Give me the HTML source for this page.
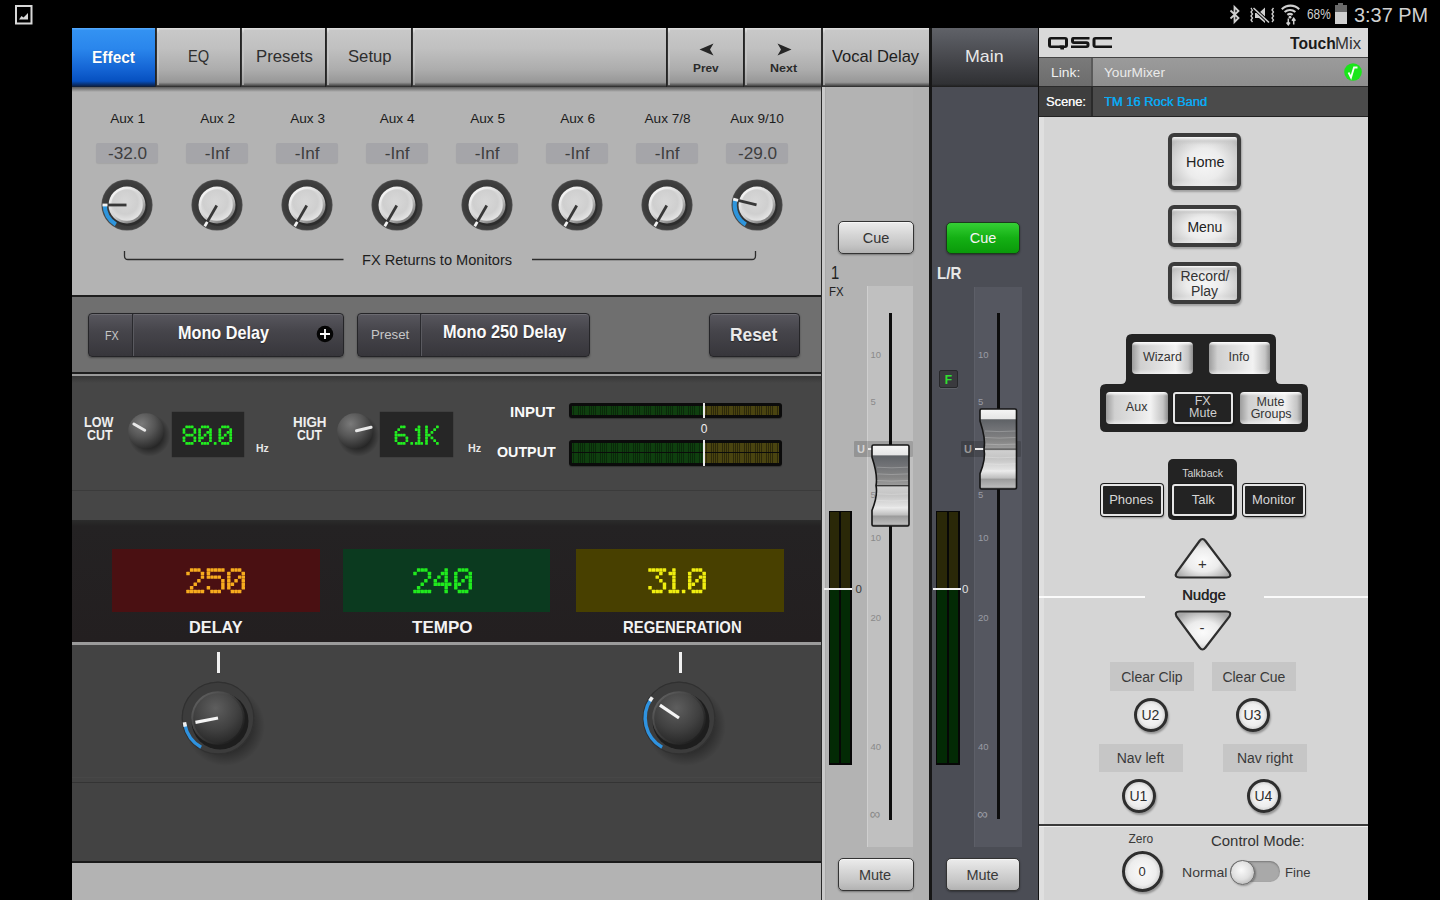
<!DOCTYPE html>
<html><head><meta charset="utf-8">
<style>
*{box-sizing:border-box;margin:0;padding:0}
html,body{width:1440px;height:900px;overflow:hidden;background:#000;font-family:"Liberation Sans",sans-serif}
.a{position:absolute}
.t{position:absolute;line-height:1;white-space:nowrap;transform-origin:0 0}
svg{position:absolute;overflow:visible}
</style></head><body>
<div class="a" style="left:0px;top:0px;width:1440px;height:900px;background:#000"></div>
<svg style="left:15px;top:5px" width="18" height="20" viewBox="0 0 18 20"><rect x="1" y="1" width="15.5" height="17.5" fill="none" stroke="#d8d8d8" stroke-width="2"/><path d="M4 14.5 L6.5 11 L8.5 12.5 L13 8 L13 14.5 Z" fill="#d8d8d8"/></svg>
<svg style="left:1228px;top:5px" width="14" height="19" viewBox="0 0 14 19"><path d="M2.5 5.5 L10.5 13 L6.5 17 L6.5 2 L10.5 6 L2.5 13.5" fill="none" stroke="#cfcfcf" stroke-width="1.8"/></svg>
<svg style="left:1248px;top:5px" width="30" height="20" viewBox="0 0 30 20"><path d="M3 3 L4.5 5 L3 7 L4.5 9 L3 11 L4.5 13 L3 15 L4.5 17" fill="none" stroke="#cfcfcf" stroke-width="1.3"/><path d="M25.5 3 L24 5 L25.5 7 L24 9 L25.5 11 L24 13 L25.5 15 L24 17" fill="none" stroke="#cfcfcf" stroke-width="1.3"/><path d="M7 8 L11 8 L17 2.5 L17 18 L11 13 L7 13 Z" fill="#cfcfcf"/><path d="M5 2.5 L21.5 18" stroke="#000" stroke-width="3.2"/><path d="M5.5 3 L21 17.5" stroke="#cfcfcf" stroke-width="1.6"/></svg>
<svg style="left:1279px;top:3px" width="23" height="23" viewBox="0 0 23 23"><path d="M2.8 6.2 A12.5 12.5 0 0 1 20.2 6.2" fill="none" stroke="#cfcfcf" stroke-width="2.2"/><path d="M5.6 9 A8.5 8.5 0 0 1 16.4 9" fill="none" stroke="#cfcfcf" stroke-width="2.2"/><path d="M8.4 11.8 A4.5 4.5 0 0 1 13.6 11.8" fill="none" stroke="#cfcfcf" stroke-width="2.2"/><circle cx="11" cy="14.2" r="1.4" fill="#cfcfcf"/><path d="M9.3 15.5 V21.5 M7.6 19.5 L9.3 21.8 L11 19.5 M14.7 21.5 V15.5 M13 17.7 L14.7 15.3 L16.4 17.7" fill="none" stroke="#cfcfcf" stroke-width="1.5"/></svg>
<div class="t" style="left:1306.50px;top:8.27px;font-size:13.8px;color:#cfcfcf;font-weight:400;font-family:'Liberation Sans';transform:scaleX(0.8593);">68%</div>
<div class="a" style="left:1338px;top:2.5px;width:5px;height:2px;background:#6a6a6a"></div>
<div class="a" style="left:1334.5px;top:4.5px;width:12px;height:7px;background:#6a6a6a"></div>
<div class="a" style="left:1334.5px;top:11.5px;width:12px;height:12.5px;background:#cfcfcf"></div>
<div class="t" style="left:1354.00px;top:5.07px;font-size:20.5px;color:#d0d0d0;font-weight:400;font-family:'Liberation Sans';transform:scaleX(0.9699);">3:37 PM</div>
<div class="a" style="left:72px;top:28px;width:84px;height:59px;background:linear-gradient(#5aaeff,#3392f2 4%,#2a86ec 35%,#1464d4 70%,#0650c0 90%,#0a2a60 97%,#101c30)"></div>
<div class="a" style="left:156px;top:28px;width:85px;height:59px;background:linear-gradient(#e2e2e2,#c8c8c8 4%,#c0c0c0 35%,#adadad 70%,#979797 92%,#555 97%,#262626)"></div>
<div class="a" style="left:241px;top:28px;width:85px;height:59px;background:linear-gradient(#e2e2e2,#c8c8c8 4%,#c0c0c0 35%,#adadad 70%,#979797 92%,#555 97%,#262626)"></div>
<div class="a" style="left:326px;top:28px;width:86px;height:59px;background:linear-gradient(#e2e2e2,#c8c8c8 4%,#c0c0c0 35%,#adadad 70%,#979797 92%,#555 97%,#262626)"></div>
<div class="a" style="left:412px;top:28px;width:255px;height:59px;background:linear-gradient(#e2e2e2,#c8c8c8 4%,#c0c0c0 35%,#adadad 70%,#979797 92%,#555 97%,#262626)"></div>
<div class="a" style="left:667px;top:28px;width:77px;height:59px;background:linear-gradient(#e2e2e2,#c8c8c8 4%,#c0c0c0 35%,#adadad 70%,#979797 92%,#555 97%,#262626)"></div>
<div class="a" style="left:744px;top:28px;width:78px;height:59px;background:linear-gradient(#e2e2e2,#c8c8c8 4%,#c0c0c0 35%,#adadad 70%,#979797 92%,#555 97%,#262626)"></div>
<div class="a" style="left:822px;top:28px;width:107px;height:59px;background:linear-gradient(#e2e2e2,#c8c8c8 4%,#c0c0c0 35%,#adadad 70%,#979797 92%,#555 97%,#262626)"></div>
<div class="a" style="left:155px;top:28px;width:2px;height:59px;background:linear-gradient(90deg,#1c1c1c,#3a3a3a)"></div>
<div class="a" style="left:157px;top:28px;width:2px;height:57px;background:linear-gradient(#e6e6e6,#c6c6c6 10%,#c4c4c4 60%,#a0a0a0)"></div>
<div class="a" style="left:240px;top:28px;width:2px;height:59px;background:linear-gradient(90deg,#1c1c1c,#3a3a3a)"></div>
<div class="a" style="left:242px;top:28px;width:2px;height:57px;background:linear-gradient(#e6e6e6,#c6c6c6 10%,#c4c4c4 60%,#a0a0a0)"></div>
<div class="a" style="left:325px;top:28px;width:2px;height:59px;background:linear-gradient(90deg,#1c1c1c,#3a3a3a)"></div>
<div class="a" style="left:327px;top:28px;width:2px;height:57px;background:linear-gradient(#e6e6e6,#c6c6c6 10%,#c4c4c4 60%,#a0a0a0)"></div>
<div class="a" style="left:411px;top:28px;width:2px;height:59px;background:linear-gradient(90deg,#1c1c1c,#3a3a3a)"></div>
<div class="a" style="left:413px;top:28px;width:2px;height:57px;background:linear-gradient(#e6e6e6,#c6c6c6 10%,#c4c4c4 60%,#a0a0a0)"></div>
<div class="a" style="left:666px;top:28px;width:2px;height:59px;background:linear-gradient(90deg,#1c1c1c,#3a3a3a)"></div>
<div class="a" style="left:668px;top:28px;width:2px;height:57px;background:linear-gradient(#e6e6e6,#c6c6c6 10%,#c4c4c4 60%,#a0a0a0)"></div>
<div class="a" style="left:743px;top:28px;width:2px;height:59px;background:linear-gradient(90deg,#1c1c1c,#3a3a3a)"></div>
<div class="a" style="left:745px;top:28px;width:2px;height:57px;background:linear-gradient(#e6e6e6,#c6c6c6 10%,#c4c4c4 60%,#a0a0a0)"></div>
<div class="a" style="left:821px;top:28px;width:2px;height:59px;background:#2a2a2a"></div>
<div class="a" style="left:823px;top:28px;width:2px;height:57px;background:linear-gradient(#e6e6e6,#c6c6c6 10%,#c4c4c4 60%,#a0a0a0)"></div>
<div class="a" style="left:929px;top:28px;width:3px;height:872px;background:#161616"></div>
<div class="a" style="left:932px;top:28px;width:106px;height:59px;background:linear-gradient(#606268,#56585e 20%,#4a4b50 45%,#3a3b3f 75%,#303134 95%,#1c1c1c)"></div>
<div class="t" style="left:91.69px;top:48.55px;font-size:17px;color:#fff;font-weight:700;font-family:'Liberation Sans';transform:scaleX(0.9105);text-shadow:0 0 1px rgba(0,0,0,.3)">Effect</div>
<div class="t" style="left:187.64px;top:48.25px;font-size:17px;color:#2e2e2e;font-weight:400;font-family:'Liberation Sans';transform:scaleX(0.8612);">EQ</div>
<div class="t" style="left:255.71px;top:47.55px;font-size:17px;color:#2e2e2e;font-weight:400;font-family:'Liberation Sans';transform:scaleX(0.9852);">Presets</div>
<div class="t" style="left:347.60px;top:47.55px;font-size:17px;color:#2e2e2e;font-weight:400;font-family:'Liberation Sans';transform:scaleX(0.9802);">Setup</div>
<div class="t" style="left:831.70px;top:48.25px;font-size:17px;color:#1e1e1e;font-weight:400;font-family:'Liberation Sans';transform:scaleX(0.9704);">Vocal Delay</div>
<div class="t" style="left:965.05px;top:47.55px;font-size:17px;color:#e8e8e8;font-weight:400;font-family:'Liberation Sans';transform:scaleX(1.0482);">Main</div>
<div class="t" style="left:692.80px;top:62.52px;font-size:10.8px;color:#2a2a2a;font-weight:700;font-family:'Liberation Sans';transform:scaleX(1.0979);">Prev</div>
<div class="t" style="left:769.70px;top:62.52px;font-size:10.8px;color:#2a2a2a;font-weight:700;font-family:'Liberation Sans';transform:scaleX(1.1551);">Next</div>
<svg style="left:699px;top:43px" width="15" height="13" viewBox="0 0 15 13"><path d="M0.5 6.5 L14.5 0.5 L11 6.5 L14.5 12.5 Z" fill="#262626"/></svg>
<svg style="left:777px;top:43px" width="15" height="13" viewBox="0 0 15 13"><path d="M14.5 6.5 L0.5 0.5 L4 6.5 L0.5 12.5 Z" fill="#262626"/></svg>
<div class="a" style="left:72px;top:87px;width:750px;height:208px;background:#b3b3b3"></div>
<div class="a" style="left:72px;top:87px;width:750px;height:5px;background:linear-gradient(#5a5a5a,rgba(179,179,179,0))"></div>
<div class="a" style="left:72px;top:295px;width:750px;height:2px;background:#1e1e1e"></div>
<div class="a" style="left:72px;top:297px;width:750px;height:75px;background:#6f6f6f"></div>
<div class="a" style="left:72px;top:372px;width:750px;height:2px;background:#1e1e1e"></div>
<div class="a" style="left:72px;top:374px;width:750px;height:2px;background:#9a9a9a"></div>
<div class="a" style="left:72px;top:376px;width:750px;height:144px;background:linear-gradient(#363636,#464646 7px,#464646)"></div>
<div class="a" style="left:72px;top:490px;width:750px;height:1px;background:#3b3b3b"></div>
<div class="a" style="left:72px;top:520px;width:750px;height:122px;background:linear-gradient(#2b2b2b,#242223 6px,#231f20)"></div>
<div class="a" style="left:72px;top:642px;width:750px;height:3px;background:#9b9b9b"></div>
<div class="a" style="left:72px;top:645px;width:750px;height:216px;background:#434343"></div>
<div class="a" style="left:72px;top:777px;width:750px;height:1px;background:#474747"></div>
<div class="a" style="left:72px;top:782px;width:750px;height:1px;background:#343434"></div>
<div class="a" style="left:72px;top:861px;width:750px;height:2px;background:#1a1a1a"></div>
<div class="a" style="left:72px;top:863px;width:750px;height:37px;background:#b3b3b3"></div>
<div class="a" style="left:821px;top:87px;width:1px;height:813px;background:#2a2a2a"></div>
<div class="a" style="left:822px;top:87px;width:107px;height:813px;background:#b3b3b3"></div>
<div class="a" style="left:822px;top:87px;width:3px;height:813px;background:#c9c9c9"></div>
<div class="a" style="left:825px;top:87px;width:1px;height:813px;background:#aaaaaa"></div>
<div class="a" style="left:913px;top:87px;width:16px;height:813px;background:#b1b1b1"></div>
<div class="a" style="left:932px;top:87px;width:106px;height:813px;background:#4b4d55"></div>
<div class="a" style="left:1038px;top:28px;width:1px;height:872px;background:#111"></div>
<div class="a" style="left:1039px;top:28px;width:329px;height:872px;background:#d5d5d5"></div>
<div class="a" style="left:1039px;top:116px;width:5px;height:784px;background:#dfdfdf"></div>
<svg width="0" height="0" style="left:0;top:0"><defs>
<radialGradient id="capL" cx="45%" cy="40%" r="65%"><stop offset="0" stop-color="#d8d8d8"/><stop offset="0.6" stop-color="#cfcfcf"/><stop offset="1" stop-color="#e8e8e8"/></radialGradient>
<linearGradient id="bevL" x1="0.2" y1="0.1" x2="0.8" y2="0.9"><stop offset="0" stop-color="#f4f4f4"/><stop offset="0.55" stop-color="#d0d0d0"/><stop offset="1" stop-color="#7a7a7a"/></linearGradient>
<radialGradient id="ringL" cx="50%" cy="50%" r="50%"><stop offset="0.75" stop-color="#393939"/><stop offset="0.95" stop-color="#404040"/><stop offset="1" stop-color="#5a5a5a"/></radialGradient>
<radialGradient id="capD" cx="45%" cy="30%" r="75%"><stop offset="0" stop-color="#5e5e5e"/><stop offset="0.6" stop-color="#404040"/><stop offset="1" stop-color="#262626"/></radialGradient>
<linearGradient id="bevD" x1="0" y1="0" x2="1" y2="1"><stop offset="0" stop-color="#6a6a6a"/><stop offset="0.5" stop-color="#3a3a3a"/><stop offset="1" stop-color="#151515"/></linearGradient>
<radialGradient id="sph" cx="38%" cy="30%" r="75%"><stop offset="0" stop-color="#7a7a7a"/><stop offset="0.5" stop-color="#555"/><stop offset="1" stop-color="#262626"/></radialGradient>
<radialGradient id="shad" cx="50%" cy="50%" r="50%"><stop offset="0.6" stop-color="#000" stop-opacity=".45"/><stop offset="1" stop-color="#000" stop-opacity="0"/></radialGradient>
<radialGradient id="btnW" cx="50%" cy="50%" r="60%"><stop offset="0" stop-color="#fdfdfd"/><stop offset="0.55" stop-color="#f0f0f0"/><stop offset="1" stop-color="#a8a8a8"/></radialGradient>
</defs></svg>
<div class="t" style="left:110.20px;top:112.14px;font-size:13.6px;color:#1c1c1c;font-weight:400;font-family:'Liberation Sans';">Aux 1</div>
<div class="a" style="left:95.8px;top:143px;width:62px;height:20px;background:#a5a5a9;border-radius:2px;box-shadow:0 1px 1px rgba(0,0,0,.08)"></div>
<div class="t" style="left:107.99px;top:144.88px;font-size:17.2px;color:#3e3e3e;font-weight:400;font-family:'Liberation Sans';">-32.0</div>
<svg style="left:97.30px;top:175.30px" width="60" height="60"><circle cx="30.0" cy="30.0" r="25.6" fill="url(#ringL)"/><path d="M18.85 49.31 A22.3 22.3 0 0 1 7.70 30.00" fill="none" stroke="#2e95dc" stroke-width="4.2"/><circle cx="31.2" cy="31.8" r="19.2" fill="#222" opacity=".55"/><circle cx="30.0" cy="30.0" r="18.5" fill="url(#bevL)"/><circle cx="30.0" cy="30.0" r="15.8" fill="url(#capL)"/><line x1="29.50" y1="30.00" x2="10.50" y2="30.00" stroke="#383838" stroke-width="2.8"/><line x1="10.50" y1="30.00" x2="5.50" y2="30.00" stroke="#f2f2f2" stroke-width="2.8"/></svg>
<div class="t" style="left:200.20px;top:112.14px;font-size:13.6px;color:#1c1c1c;font-weight:400;font-family:'Liberation Sans';">Aux 2</div>
<div class="a" style="left:185.8px;top:143px;width:62px;height:20px;background:#a5a5a9;border-radius:2px;box-shadow:0 1px 1px rgba(0,0,0,.08)"></div>
<div class="t" style="left:204.77px;top:144.88px;font-size:17.2px;color:#3e3e3e;font-weight:400;font-family:'Liberation Sans';">-Inf</div>
<svg style="left:187.30px;top:175.30px" width="60" height="60"><circle cx="30.0" cy="30.0" r="25.6" fill="url(#ringL)"/><circle cx="31.2" cy="31.8" r="19.2" fill="#222" opacity=".55"/><circle cx="30.0" cy="30.0" r="18.5" fill="url(#bevL)"/><circle cx="30.0" cy="30.0" r="15.8" fill="url(#capL)"/><line x1="29.75" y1="30.43" x2="20.25" y2="46.89" stroke="#383838" stroke-width="2.8"/><line x1="20.25" y1="46.89" x2="17.75" y2="51.22" stroke="#f2f2f2" stroke-width="2.8"/></svg>
<div class="t" style="left:290.20px;top:112.14px;font-size:13.6px;color:#1c1c1c;font-weight:400;font-family:'Liberation Sans';">Aux 3</div>
<div class="a" style="left:275.8px;top:143px;width:62px;height:20px;background:#a5a5a9;border-radius:2px;box-shadow:0 1px 1px rgba(0,0,0,.08)"></div>
<div class="t" style="left:294.77px;top:144.88px;font-size:17.2px;color:#3e3e3e;font-weight:400;font-family:'Liberation Sans';">-Inf</div>
<svg style="left:277.30px;top:175.30px" width="60" height="60"><circle cx="30.0" cy="30.0" r="25.6" fill="url(#ringL)"/><circle cx="31.2" cy="31.8" r="19.2" fill="#222" opacity=".55"/><circle cx="30.0" cy="30.0" r="18.5" fill="url(#bevL)"/><circle cx="30.0" cy="30.0" r="15.8" fill="url(#capL)"/><line x1="29.75" y1="30.43" x2="20.25" y2="46.89" stroke="#383838" stroke-width="2.8"/><line x1="20.25" y1="46.89" x2="17.75" y2="51.22" stroke="#f2f2f2" stroke-width="2.8"/></svg>
<div class="t" style="left:379.70px;top:112.14px;font-size:13.6px;color:#1c1c1c;font-weight:400;font-family:'Liberation Sans';">Aux 4</div>
<div class="a" style="left:365.8px;top:143px;width:62px;height:20px;background:#a5a5a9;border-radius:2px;box-shadow:0 1px 1px rgba(0,0,0,.08)"></div>
<div class="t" style="left:384.77px;top:144.88px;font-size:17.2px;color:#3e3e3e;font-weight:400;font-family:'Liberation Sans';">-Inf</div>
<svg style="left:367.30px;top:175.30px" width="60" height="60"><circle cx="30.0" cy="30.0" r="25.6" fill="url(#ringL)"/><circle cx="31.2" cy="31.8" r="19.2" fill="#222" opacity=".55"/><circle cx="30.0" cy="30.0" r="18.5" fill="url(#bevL)"/><circle cx="30.0" cy="30.0" r="15.8" fill="url(#capL)"/><line x1="29.75" y1="30.43" x2="20.25" y2="46.89" stroke="#383838" stroke-width="2.8"/><line x1="20.25" y1="46.89" x2="17.75" y2="51.22" stroke="#f2f2f2" stroke-width="2.8"/></svg>
<div class="t" style="left:470.20px;top:112.14px;font-size:13.6px;color:#1c1c1c;font-weight:400;font-family:'Liberation Sans';">Aux 5</div>
<div class="a" style="left:455.8px;top:143px;width:62px;height:20px;background:#a5a5a9;border-radius:2px;box-shadow:0 1px 1px rgba(0,0,0,.08)"></div>
<div class="t" style="left:474.77px;top:144.88px;font-size:17.2px;color:#3e3e3e;font-weight:400;font-family:'Liberation Sans';">-Inf</div>
<svg style="left:457.30px;top:175.30px" width="60" height="60"><circle cx="30.0" cy="30.0" r="25.6" fill="url(#ringL)"/><circle cx="31.2" cy="31.8" r="19.2" fill="#222" opacity=".55"/><circle cx="30.0" cy="30.0" r="18.5" fill="url(#bevL)"/><circle cx="30.0" cy="30.0" r="15.8" fill="url(#capL)"/><line x1="29.75" y1="30.43" x2="20.25" y2="46.89" stroke="#383838" stroke-width="2.8"/><line x1="20.25" y1="46.89" x2="17.75" y2="51.22" stroke="#f2f2f2" stroke-width="2.8"/></svg>
<div class="t" style="left:560.20px;top:112.14px;font-size:13.6px;color:#1c1c1c;font-weight:400;font-family:'Liberation Sans';">Aux 6</div>
<div class="a" style="left:545.8px;top:143px;width:62px;height:20px;background:#a5a5a9;border-radius:2px;box-shadow:0 1px 1px rgba(0,0,0,.08)"></div>
<div class="t" style="left:564.77px;top:144.88px;font-size:17.2px;color:#3e3e3e;font-weight:400;font-family:'Liberation Sans';">-Inf</div>
<svg style="left:547.30px;top:175.30px" width="60" height="60"><circle cx="30.0" cy="30.0" r="25.6" fill="url(#ringL)"/><circle cx="31.2" cy="31.8" r="19.2" fill="#222" opacity=".55"/><circle cx="30.0" cy="30.0" r="18.5" fill="url(#bevL)"/><circle cx="30.0" cy="30.0" r="15.8" fill="url(#capL)"/><line x1="29.75" y1="30.43" x2="20.25" y2="46.89" stroke="#383838" stroke-width="2.8"/><line x1="20.25" y1="46.89" x2="17.75" y2="51.22" stroke="#f2f2f2" stroke-width="2.8"/></svg>
<div class="t" style="left:644.53px;top:112.14px;font-size:13.6px;color:#1c1c1c;font-weight:400;font-family:'Liberation Sans';">Aux 7/8</div>
<div class="a" style="left:635.8px;top:143px;width:62px;height:20px;background:#a5a5a9;border-radius:2px;box-shadow:0 1px 1px rgba(0,0,0,.08)"></div>
<div class="t" style="left:654.77px;top:144.88px;font-size:17.2px;color:#3e3e3e;font-weight:400;font-family:'Liberation Sans';">-Inf</div>
<svg style="left:637.30px;top:175.30px" width="60" height="60"><circle cx="30.0" cy="30.0" r="25.6" fill="url(#ringL)"/><circle cx="31.2" cy="31.8" r="19.2" fill="#222" opacity=".55"/><circle cx="30.0" cy="30.0" r="18.5" fill="url(#bevL)"/><circle cx="30.0" cy="30.0" r="15.8" fill="url(#capL)"/><line x1="29.75" y1="30.43" x2="20.25" y2="46.89" stroke="#383838" stroke-width="2.8"/><line x1="20.25" y1="46.89" x2="17.75" y2="51.22" stroke="#f2f2f2" stroke-width="2.8"/></svg>
<div class="t" style="left:730.25px;top:112.14px;font-size:13.6px;color:#1c1c1c;font-weight:400;font-family:'Liberation Sans';">Aux 9/10</div>
<div class="a" style="left:725.8px;top:143px;width:62px;height:20px;background:#a5a5a9;border-radius:2px;box-shadow:0 1px 1px rgba(0,0,0,.08)"></div>
<div class="t" style="left:737.99px;top:144.88px;font-size:17.2px;color:#3e3e3e;font-weight:400;font-family:'Liberation Sans';">-29.0</div>
<svg style="left:727.30px;top:175.30px" width="60" height="60"><circle cx="30.0" cy="30.0" r="25.6" fill="url(#ringL)"/><path d="M18.85 49.31 A22.3 22.3 0 0 1 8.36 24.61" fill="none" stroke="#2e95dc" stroke-width="4.2"/><circle cx="31.2" cy="31.8" r="19.2" fill="#222" opacity=".55"/><circle cx="30.0" cy="30.0" r="18.5" fill="url(#bevL)"/><circle cx="30.0" cy="30.0" r="15.8" fill="url(#capL)"/><line x1="29.51" y1="29.88" x2="11.08" y2="25.28" stroke="#383838" stroke-width="2.8"/><line x1="11.08" y1="25.28" x2="6.23" y2="24.07" stroke="#f2f2f2" stroke-width="2.8"/></svg>
<svg style="left:120px;top:248px" width="640" height="16"><path d="M4.5 3 L4.5 8 Q4.5 11.5 8 11.5 L223.5 11.5" fill="none" stroke="#2c2c2c" stroke-width="1.3"/><path d="M412 11.5 L632 11.5 Q635.5 11.5 635.5 8 L635.5 3" fill="none" stroke="#2c2c2c" stroke-width="1.3"/></svg>
<div class="t" style="left:362.29px;top:253.38px;font-size:14.5px;color:#1e1e1e;font-weight:400;font-family:'Liberation Sans';transform:scaleX(1.0066);">FX Returns to Monitors</div>
<div class="a" style="left:88px;top:313px;width:256px;height:44px;background:linear-gradient(#58575e,#46454b 40%,#37363b);border:1px solid #252528;border-radius:4px;box-shadow:0 1px 2px rgba(0,0,0,.35), inset 0 1px 0 rgba(255,255,255,.12)"></div>
<div class="a" style="left:132px;top:314px;width:1px;height:42px;background:#2a2a2e;box-shadow:1px 0 0 #5a5a60"></div>
<div class="t" style="left:105.20px;top:328.52px;font-size:13.5px;color:#c8c8c8;font-weight:400;font-family:'Liberation Sans';transform:scaleX(0.8002);">FX</div>
<div class="t" style="left:178.42px;top:323.57px;font-size:18.5px;color:#fafafa;font-weight:700;font-family:'Liberation Sans';transform:scaleX(0.8761);text-shadow:0 1px 1px rgba(0,0,0,.4)">Mono Delay</div>
<svg style="left:316px;top:325px" width="18" height="18" viewBox="0 0 18 18"><circle cx="9" cy="9" r="8.3" fill="#050505"/><path d="M9 4 V14 M4 9 H14" stroke="#fff" stroke-width="1.8"/></svg>
<div class="a" style="left:357px;top:313px;width:233px;height:44px;background:linear-gradient(#58575e,#46454b 40%,#37363b);border:1px solid #252528;border-radius:4px;box-shadow:0 1px 2px rgba(0,0,0,.35), inset 0 1px 0 rgba(255,255,255,.12)"></div>
<div class="a" style="left:420px;top:314px;width:1px;height:42px;background:#2a2a2e;box-shadow:1px 0 0 #5a5a60"></div>
<div class="t" style="left:370.92px;top:328.12px;font-size:13.5px;color:#c8c8c8;font-weight:400;font-family:'Liberation Sans';transform:scaleX(0.9800);">Preset</div>
<div class="t" style="left:442.87px;top:323.47px;font-size:18.5px;color:#fafafa;font-weight:700;font-family:'Liberation Sans';transform:scaleX(0.8811);text-shadow:0 1px 1px rgba(0,0,0,.4)">Mono 250 Delay</div>
<div class="a" style="left:709px;top:313px;width:91px;height:44px;background:linear-gradient(#58575e,#46454b 40%,#37363b);border:1px solid #252528;border-radius:4px;box-shadow:0 1px 2px rgba(0,0,0,.35), inset 0 1px 0 rgba(255,255,255,.12)"></div>
<div class="t" style="left:730.09px;top:325.35px;font-size:19px;color:#eaeaea;font-weight:700;font-family:'Liberation Sans';transform:scaleX(0.9140);text-shadow:0 1px 1px rgba(0,0,0,.4)">Reset</div>
<div class="t" style="left:84.30px;top:415.87px;font-size:13.8px;color:#eeeeee;font-weight:700;font-family:'Liberation Sans';transform:scaleX(0.9108);">LOW</div>
<div class="t" style="left:86.50px;top:429.07px;font-size:13.8px;color:#eeeeee;font-weight:700;font-family:'Liberation Sans';transform:scaleX(0.8988);">CUT</div>
<div class="t" style="left:293.00px;top:416.17px;font-size:13.8px;color:#eeeeee;font-weight:700;font-family:'Liberation Sans';transform:scaleX(0.9731);">HIGH</div>
<div class="t" style="left:297.00px;top:429.27px;font-size:13.8px;color:#eeeeee;font-weight:700;font-family:'Liberation Sans';transform:scaleX(0.8815);">CUT</div>
<svg style="left:120.6px;top:406.3px" width="50" height="50"><circle cx="28.5" cy="29.5" r="21" fill="url(#shad)"/><circle cx="25" cy="25" r="17.8" fill="url(#sph)"/><line x1="23.7" y1="24.2" x2="12.9" y2="18.0" stroke="#e8e8e8" stroke-width="3" stroke-linecap="round"/></svg>
<svg style="left:329.9px;top:405.5px" width="50" height="50"><circle cx="28.5" cy="29.5" r="21" fill="url(#shad)"/><circle cx="25" cy="25" r="17.8" fill="url(#sph)"/><line x1="26.5" y1="24.7" x2="41.1" y2="21.3" stroke="#e8e8e8" stroke-width="3" stroke-linecap="round"/></svg>
<div class="a" style="left:172px;top:412px;width:72px;height:45px;background:#262626;box-shadow:0 0 1px rgba(0,0,0,.5)"></div>
<div class="a" style="left:380px;top:412px;width:73px;height:45px;background:#262626;box-shadow:0 0 1px rgba(0,0,0,.5)"></div>
<svg style="left:180.40px;top:423.30px" width="57" height="27" fill="#22ee20"><rect x="5.34" y="2.62" width="2.75" height="2.75" rx="0.6"/><rect x="8.06" y="2.62" width="2.75" height="2.75" rx="0.6"/><rect x="10.78" y="2.62" width="2.75" height="2.75" rx="0.6"/><rect x="2.62" y="5.37" width="2.75" height="2.75" rx="0.6"/><rect x="13.50" y="5.37" width="2.75" height="2.75" rx="0.6"/><rect x="2.62" y="8.11" width="2.75" height="2.75" rx="0.6"/><rect x="13.50" y="8.11" width="2.75" height="2.75" rx="0.6"/><rect x="5.34" y="10.85" width="2.75" height="2.75" rx="0.6"/><rect x="8.06" y="10.85" width="2.75" height="2.75" rx="0.6"/><rect x="10.78" y="10.85" width="2.75" height="2.75" rx="0.6"/><rect x="2.62" y="13.58" width="2.75" height="2.75" rx="0.6"/><rect x="13.50" y="13.58" width="2.75" height="2.75" rx="0.6"/><rect x="2.62" y="16.32" width="2.75" height="2.75" rx="0.6"/><rect x="13.50" y="16.32" width="2.75" height="2.75" rx="0.6"/><rect x="5.34" y="19.06" width="2.75" height="2.75" rx="0.6"/><rect x="8.06" y="19.06" width="2.75" height="2.75" rx="0.6"/><rect x="10.78" y="19.06" width="2.75" height="2.75" rx="0.6"/><rect x="20.94" y="2.62" width="2.75" height="2.75" rx="0.6"/><rect x="23.66" y="2.62" width="2.75" height="2.75" rx="0.6"/><rect x="26.38" y="2.62" width="2.75" height="2.75" rx="0.6"/><rect x="18.22" y="5.37" width="2.75" height="2.75" rx="0.6"/><rect x="29.10" y="5.37" width="2.75" height="2.75" rx="0.6"/><rect x="18.22" y="8.11" width="2.75" height="2.75" rx="0.6"/><rect x="26.38" y="8.11" width="2.75" height="2.75" rx="0.6"/><rect x="29.10" y="8.11" width="2.75" height="2.75" rx="0.6"/><rect x="18.22" y="10.85" width="2.75" height="2.75" rx="0.6"/><rect x="23.66" y="10.85" width="2.75" height="2.75" rx="0.6"/><rect x="29.10" y="10.85" width="2.75" height="2.75" rx="0.6"/><rect x="18.22" y="13.58" width="2.75" height="2.75" rx="0.6"/><rect x="20.94" y="13.58" width="2.75" height="2.75" rx="0.6"/><rect x="29.10" y="13.58" width="2.75" height="2.75" rx="0.6"/><rect x="18.22" y="16.32" width="2.75" height="2.75" rx="0.6"/><rect x="29.10" y="16.32" width="2.75" height="2.75" rx="0.6"/><rect x="20.94" y="19.06" width="2.75" height="2.75" rx="0.6"/><rect x="23.66" y="19.06" width="2.75" height="2.75" rx="0.6"/><rect x="26.38" y="19.06" width="2.75" height="2.75" rx="0.6"/><rect x="33.82" y="19.06" width="2.75" height="2.75" rx="0.6"/><rect x="41.14" y="2.62" width="2.75" height="2.75" rx="0.6"/><rect x="43.86" y="2.62" width="2.75" height="2.75" rx="0.6"/><rect x="46.58" y="2.62" width="2.75" height="2.75" rx="0.6"/><rect x="38.42" y="5.37" width="2.75" height="2.75" rx="0.6"/><rect x="49.30" y="5.37" width="2.75" height="2.75" rx="0.6"/><rect x="38.42" y="8.11" width="2.75" height="2.75" rx="0.6"/><rect x="46.58" y="8.11" width="2.75" height="2.75" rx="0.6"/><rect x="49.30" y="8.11" width="2.75" height="2.75" rx="0.6"/><rect x="38.42" y="10.85" width="2.75" height="2.75" rx="0.6"/><rect x="43.86" y="10.85" width="2.75" height="2.75" rx="0.6"/><rect x="49.30" y="10.85" width="2.75" height="2.75" rx="0.6"/><rect x="38.42" y="13.58" width="2.75" height="2.75" rx="0.6"/><rect x="41.14" y="13.58" width="2.75" height="2.75" rx="0.6"/><rect x="49.30" y="13.58" width="2.75" height="2.75" rx="0.6"/><rect x="38.42" y="16.32" width="2.75" height="2.75" rx="0.6"/><rect x="49.30" y="16.32" width="2.75" height="2.75" rx="0.6"/><rect x="41.14" y="19.06" width="2.75" height="2.75" rx="0.6"/><rect x="43.86" y="19.06" width="2.75" height="2.75" rx="0.6"/><rect x="46.58" y="19.06" width="2.75" height="2.75" rx="0.6"/></svg>
<svg style="left:392.00px;top:423.30px" width="52" height="27" fill="#22ee20"><rect x="8.06" y="2.62" width="2.75" height="2.75" rx="0.6"/><rect x="10.79" y="2.62" width="2.75" height="2.75" rx="0.6"/><rect x="5.35" y="5.37" width="2.75" height="2.75" rx="0.6"/><rect x="2.62" y="8.11" width="2.75" height="2.75" rx="0.6"/><rect x="2.62" y="10.85" width="2.75" height="2.75" rx="0.6"/><rect x="5.35" y="10.85" width="2.75" height="2.75" rx="0.6"/><rect x="8.06" y="10.85" width="2.75" height="2.75" rx="0.6"/><rect x="10.79" y="10.85" width="2.75" height="2.75" rx="0.6"/><rect x="2.62" y="13.58" width="2.75" height="2.75" rx="0.6"/><rect x="13.50" y="13.58" width="2.75" height="2.75" rx="0.6"/><rect x="2.62" y="16.32" width="2.75" height="2.75" rx="0.6"/><rect x="13.50" y="16.32" width="2.75" height="2.75" rx="0.6"/><rect x="5.35" y="19.06" width="2.75" height="2.75" rx="0.6"/><rect x="8.06" y="19.06" width="2.75" height="2.75" rx="0.6"/><rect x="10.79" y="19.06" width="2.75" height="2.75" rx="0.6"/><rect x="18.32" y="19.06" width="2.75" height="2.75" rx="0.6"/><rect x="25.60" y="2.62" width="2.75" height="2.75" rx="0.6"/><rect x="22.88" y="5.37" width="2.75" height="2.75" rx="0.6"/><rect x="25.60" y="5.37" width="2.75" height="2.75" rx="0.6"/><rect x="25.60" y="8.11" width="2.75" height="2.75" rx="0.6"/><rect x="25.60" y="10.85" width="2.75" height="2.75" rx="0.6"/><rect x="25.60" y="13.58" width="2.75" height="2.75" rx="0.6"/><rect x="25.60" y="16.32" width="2.75" height="2.75" rx="0.6"/><rect x="22.88" y="19.06" width="2.75" height="2.75" rx="0.6"/><rect x="25.60" y="19.06" width="2.75" height="2.75" rx="0.6"/><rect x="28.31" y="19.06" width="2.75" height="2.75" rx="0.6"/><rect x="33.12" y="2.62" width="2.75" height="2.75" rx="0.6"/><rect x="44.00" y="2.62" width="2.75" height="2.75" rx="0.6"/><rect x="33.12" y="5.37" width="2.75" height="2.75" rx="0.6"/><rect x="41.29" y="5.37" width="2.75" height="2.75" rx="0.6"/><rect x="33.12" y="8.11" width="2.75" height="2.75" rx="0.6"/><rect x="38.56" y="8.11" width="2.75" height="2.75" rx="0.6"/><rect x="33.12" y="10.85" width="2.75" height="2.75" rx="0.6"/><rect x="35.85" y="10.85" width="2.75" height="2.75" rx="0.6"/><rect x="33.12" y="13.58" width="2.75" height="2.75" rx="0.6"/><rect x="38.56" y="13.58" width="2.75" height="2.75" rx="0.6"/><rect x="33.12" y="16.32" width="2.75" height="2.75" rx="0.6"/><rect x="41.29" y="16.32" width="2.75" height="2.75" rx="0.6"/><rect x="33.12" y="19.06" width="2.75" height="2.75" rx="0.6"/><rect x="44.00" y="19.06" width="2.75" height="2.75" rx="0.6"/></svg>
<div class="t" style="left:256.00px;top:443.23px;font-size:11.5px;color:#e6e6e6;font-weight:700;font-family:'Liberation Sans';transform:scaleX(0.9088);">Hz</div>
<div class="t" style="left:467.60px;top:442.83px;font-size:11.5px;color:#e6e6e6;font-weight:700;font-family:'Liberation Sans';transform:scaleX(0.9367);">Hz</div>
<div class="t" style="left:510.00px;top:403.55px;font-size:15px;color:#fafafa;font-weight:700;font-family:'Liberation Sans';">INPUT</div>
<div class="t" style="left:496.50px;top:444.45px;font-size:15px;color:#fafafa;font-weight:700;font-family:'Liberation Sans';transform:scaleX(0.9512);">OUTPUT</div>
<div class="t" style="left:700.80px;top:423.30px;font-size:12px;color:#f0f0f0;font-weight:400;font-family:'Liberation Sans';">0</div>
<div class="a" style="left:568.5px;top:403px;width:213px;height:15px;background:#0b0b0b;border-radius:3px;box-shadow:0 1px 1px rgba(0,0,0,.3)"></div>
<div class="a" style="left:571.5px;top:406.0px;width:132.5px;height:9.0px;background:repeating-linear-gradient(90deg,#0f3f0f 0px,#0f3f0f 1.4px,#0a2a0a 1.4px,#0a2a0a 2.2px)"></div>
<div class="a" style="left:705.0px;top:406.0px;width:73.5px;height:9.0px;background:repeating-linear-gradient(90deg,#4a4410 0px,#4a4410 1.4px,#2d290a 1.4px,#2d290a 2.2px)"></div>
<div class="a" style="left:703px;top:403px;width:2px;height:15px;background:#e8e8e8"></div>
<div class="a" style="left:568.5px;top:440px;width:213px;height:25.5px;background:#0b0b0b;border-radius:3px;box-shadow:0 1px 1px rgba(0,0,0,.3)"></div>
<div class="a" style="left:571.5px;top:443.0px;width:132.5px;height:9.25px;background:repeating-linear-gradient(90deg,#0f3f0f 0px,#0f3f0f 1.4px,#0a2a0a 1.4px,#0a2a0a 2.2px)"></div>
<div class="a" style="left:705.0px;top:443.0px;width:73.5px;height:9.25px;background:repeating-linear-gradient(90deg,#4a4410 0px,#4a4410 1.4px,#2d290a 1.4px,#2d290a 2.2px)"></div>
<div class="a" style="left:571.5px;top:453.25px;width:132.5px;height:9.25px;background:repeating-linear-gradient(90deg,#0f3f0f 0px,#0f3f0f 1.4px,#0a2a0a 1.4px,#0a2a0a 2.2px)"></div>
<div class="a" style="left:705.0px;top:453.25px;width:73.5px;height:9.25px;background:repeating-linear-gradient(90deg,#4a4410 0px,#4a4410 1.4px,#2d290a 1.4px,#2d290a 2.2px)"></div>
<div class="a" style="left:703px;top:440px;width:2px;height:25.5px;background:#e8e8e8"></div>
<div class="a" style="left:112px;top:549px;width:208px;height:63px;background:#4a1012"></div>
<div class="a" style="left:343px;top:549px;width:207px;height:63px;background:#0b3a1f"></div>
<div class="a" style="left:576px;top:549px;width:208px;height:63px;background:#484000"></div>
<svg style="left:183.80px;top:566.00px" width="67" height="33" fill="#f7ac1e"><rect x="5.90" y="2.27" width="3.45" height="3.45" rx="0.5"/><rect x="9.52" y="2.27" width="3.45" height="3.45" rx="0.5"/><rect x="13.14" y="2.27" width="3.45" height="3.45" rx="0.5"/><rect x="2.28" y="5.85" width="3.45" height="3.45" rx="0.5"/><rect x="16.75" y="5.85" width="3.45" height="3.45" rx="0.5"/><rect x="16.75" y="9.41" width="3.45" height="3.45" rx="0.5"/><rect x="13.14" y="12.99" width="3.45" height="3.45" rx="0.5"/><rect x="9.52" y="16.55" width="3.45" height="3.45" rx="0.5"/><rect x="5.90" y="20.12" width="3.45" height="3.45" rx="0.5"/><rect x="2.28" y="23.69" width="3.45" height="3.45" rx="0.5"/><rect x="5.90" y="23.69" width="3.45" height="3.45" rx="0.5"/><rect x="9.52" y="23.69" width="3.45" height="3.45" rx="0.5"/><rect x="13.14" y="23.69" width="3.45" height="3.45" rx="0.5"/><rect x="16.75" y="23.69" width="3.45" height="3.45" rx="0.5"/><rect x="22.67" y="2.27" width="3.45" height="3.45" rx="0.5"/><rect x="26.29" y="2.27" width="3.45" height="3.45" rx="0.5"/><rect x="29.91" y="2.27" width="3.45" height="3.45" rx="0.5"/><rect x="33.53" y="2.27" width="3.45" height="3.45" rx="0.5"/><rect x="37.15" y="2.27" width="3.45" height="3.45" rx="0.5"/><rect x="22.67" y="5.85" width="3.45" height="3.45" rx="0.5"/><rect x="22.67" y="9.41" width="3.45" height="3.45" rx="0.5"/><rect x="26.29" y="9.41" width="3.45" height="3.45" rx="0.5"/><rect x="29.91" y="9.41" width="3.45" height="3.45" rx="0.5"/><rect x="33.53" y="9.41" width="3.45" height="3.45" rx="0.5"/><rect x="37.15" y="12.99" width="3.45" height="3.45" rx="0.5"/><rect x="37.15" y="16.55" width="3.45" height="3.45" rx="0.5"/><rect x="22.67" y="20.12" width="3.45" height="3.45" rx="0.5"/><rect x="37.15" y="20.12" width="3.45" height="3.45" rx="0.5"/><rect x="26.29" y="23.69" width="3.45" height="3.45" rx="0.5"/><rect x="29.91" y="23.69" width="3.45" height="3.45" rx="0.5"/><rect x="33.53" y="23.69" width="3.45" height="3.45" rx="0.5"/><rect x="46.69" y="2.27" width="3.45" height="3.45" rx="0.5"/><rect x="50.31" y="2.27" width="3.45" height="3.45" rx="0.5"/><rect x="53.93" y="2.27" width="3.45" height="3.45" rx="0.5"/><rect x="43.07" y="5.85" width="3.45" height="3.45" rx="0.5"/><rect x="57.55" y="5.85" width="3.45" height="3.45" rx="0.5"/><rect x="43.07" y="9.41" width="3.45" height="3.45" rx="0.5"/><rect x="53.93" y="9.41" width="3.45" height="3.45" rx="0.5"/><rect x="57.55" y="9.41" width="3.45" height="3.45" rx="0.5"/><rect x="43.07" y="12.99" width="3.45" height="3.45" rx="0.5"/><rect x="50.31" y="12.99" width="3.45" height="3.45" rx="0.5"/><rect x="57.55" y="12.99" width="3.45" height="3.45" rx="0.5"/><rect x="43.07" y="16.55" width="3.45" height="3.45" rx="0.5"/><rect x="46.69" y="16.55" width="3.45" height="3.45" rx="0.5"/><rect x="57.55" y="16.55" width="3.45" height="3.45" rx="0.5"/><rect x="43.07" y="20.12" width="3.45" height="3.45" rx="0.5"/><rect x="57.55" y="20.12" width="3.45" height="3.45" rx="0.5"/><rect x="46.69" y="23.69" width="3.45" height="3.45" rx="0.5"/><rect x="50.31" y="23.69" width="3.45" height="3.45" rx="0.5"/><rect x="53.93" y="23.69" width="3.45" height="3.45" rx="0.5"/></svg>
<svg style="left:411.30px;top:566.00px" width="67" height="33" fill="#20ea1e"><rect x="5.89" y="2.27" width="3.45" height="3.45" rx="0.5"/><rect x="9.51" y="2.27" width="3.45" height="3.45" rx="0.5"/><rect x="13.13" y="2.27" width="3.45" height="3.45" rx="0.5"/><rect x="2.27" y="5.85" width="3.45" height="3.45" rx="0.5"/><rect x="16.75" y="5.85" width="3.45" height="3.45" rx="0.5"/><rect x="16.75" y="9.41" width="3.45" height="3.45" rx="0.5"/><rect x="13.13" y="12.99" width="3.45" height="3.45" rx="0.5"/><rect x="9.51" y="16.55" width="3.45" height="3.45" rx="0.5"/><rect x="5.89" y="20.12" width="3.45" height="3.45" rx="0.5"/><rect x="2.27" y="23.69" width="3.45" height="3.45" rx="0.5"/><rect x="5.89" y="23.69" width="3.45" height="3.45" rx="0.5"/><rect x="9.51" y="23.69" width="3.45" height="3.45" rx="0.5"/><rect x="13.13" y="23.69" width="3.45" height="3.45" rx="0.5"/><rect x="16.75" y="23.69" width="3.45" height="3.45" rx="0.5"/><rect x="33.44" y="2.27" width="3.45" height="3.45" rx="0.5"/><rect x="29.81" y="5.85" width="3.45" height="3.45" rx="0.5"/><rect x="33.44" y="5.85" width="3.45" height="3.45" rx="0.5"/><rect x="26.19" y="9.41" width="3.45" height="3.45" rx="0.5"/><rect x="33.44" y="9.41" width="3.45" height="3.45" rx="0.5"/><rect x="22.57" y="12.99" width="3.45" height="3.45" rx="0.5"/><rect x="33.44" y="12.99" width="3.45" height="3.45" rx="0.5"/><rect x="22.57" y="16.55" width="3.45" height="3.45" rx="0.5"/><rect x="26.19" y="16.55" width="3.45" height="3.45" rx="0.5"/><rect x="29.81" y="16.55" width="3.45" height="3.45" rx="0.5"/><rect x="33.44" y="16.55" width="3.45" height="3.45" rx="0.5"/><rect x="37.06" y="16.55" width="3.45" height="3.45" rx="0.5"/><rect x="33.44" y="20.12" width="3.45" height="3.45" rx="0.5"/><rect x="33.44" y="23.69" width="3.45" height="3.45" rx="0.5"/><rect x="46.69" y="2.27" width="3.45" height="3.45" rx="0.5"/><rect x="50.31" y="2.27" width="3.45" height="3.45" rx="0.5"/><rect x="53.94" y="2.27" width="3.45" height="3.45" rx="0.5"/><rect x="43.07" y="5.85" width="3.45" height="3.45" rx="0.5"/><rect x="57.56" y="5.85" width="3.45" height="3.45" rx="0.5"/><rect x="43.07" y="9.41" width="3.45" height="3.45" rx="0.5"/><rect x="53.94" y="9.41" width="3.45" height="3.45" rx="0.5"/><rect x="57.56" y="9.41" width="3.45" height="3.45" rx="0.5"/><rect x="43.07" y="12.99" width="3.45" height="3.45" rx="0.5"/><rect x="50.31" y="12.99" width="3.45" height="3.45" rx="0.5"/><rect x="57.56" y="12.99" width="3.45" height="3.45" rx="0.5"/><rect x="43.07" y="16.55" width="3.45" height="3.45" rx="0.5"/><rect x="46.69" y="16.55" width="3.45" height="3.45" rx="0.5"/><rect x="57.56" y="16.55" width="3.45" height="3.45" rx="0.5"/><rect x="43.07" y="20.12" width="3.45" height="3.45" rx="0.5"/><rect x="57.56" y="20.12" width="3.45" height="3.45" rx="0.5"/><rect x="46.69" y="23.69" width="3.45" height="3.45" rx="0.5"/><rect x="50.31" y="23.69" width="3.45" height="3.45" rx="0.5"/><rect x="53.94" y="23.69" width="3.45" height="3.45" rx="0.5"/></svg>
<svg style="left:646.30px;top:566.00px" width="66" height="33" fill="#f0ee10"><rect x="2.27" y="2.27" width="3.45" height="3.45" rx="0.5"/><rect x="5.89" y="2.27" width="3.45" height="3.45" rx="0.5"/><rect x="9.51" y="2.27" width="3.45" height="3.45" rx="0.5"/><rect x="13.13" y="2.27" width="3.45" height="3.45" rx="0.5"/><rect x="16.75" y="2.27" width="3.45" height="3.45" rx="0.5"/><rect x="13.13" y="5.85" width="3.45" height="3.45" rx="0.5"/><rect x="9.51" y="9.41" width="3.45" height="3.45" rx="0.5"/><rect x="13.13" y="12.99" width="3.45" height="3.45" rx="0.5"/><rect x="16.75" y="16.55" width="3.45" height="3.45" rx="0.5"/><rect x="2.27" y="20.12" width="3.45" height="3.45" rx="0.5"/><rect x="16.75" y="20.12" width="3.45" height="3.45" rx="0.5"/><rect x="5.89" y="23.69" width="3.45" height="3.45" rx="0.5"/><rect x="9.51" y="23.69" width="3.45" height="3.45" rx="0.5"/><rect x="13.13" y="23.69" width="3.45" height="3.45" rx="0.5"/><rect x="26.20" y="2.27" width="3.45" height="3.45" rx="0.5"/><rect x="22.58" y="5.85" width="3.45" height="3.45" rx="0.5"/><rect x="26.20" y="5.85" width="3.45" height="3.45" rx="0.5"/><rect x="26.20" y="9.41" width="3.45" height="3.45" rx="0.5"/><rect x="26.20" y="12.99" width="3.45" height="3.45" rx="0.5"/><rect x="26.20" y="16.55" width="3.45" height="3.45" rx="0.5"/><rect x="26.20" y="20.12" width="3.45" height="3.45" rx="0.5"/><rect x="22.58" y="23.69" width="3.45" height="3.45" rx="0.5"/><rect x="26.20" y="23.69" width="3.45" height="3.45" rx="0.5"/><rect x="29.82" y="23.69" width="3.45" height="3.45" rx="0.5"/><rect x="35.88" y="23.69" width="3.45" height="3.45" rx="0.5"/><rect x="45.60" y="2.27" width="3.45" height="3.45" rx="0.5"/><rect x="49.22" y="2.27" width="3.45" height="3.45" rx="0.5"/><rect x="52.84" y="2.27" width="3.45" height="3.45" rx="0.5"/><rect x="41.98" y="5.85" width="3.45" height="3.45" rx="0.5"/><rect x="56.46" y="5.85" width="3.45" height="3.45" rx="0.5"/><rect x="41.98" y="9.41" width="3.45" height="3.45" rx="0.5"/><rect x="52.84" y="9.41" width="3.45" height="3.45" rx="0.5"/><rect x="56.46" y="9.41" width="3.45" height="3.45" rx="0.5"/><rect x="41.98" y="12.99" width="3.45" height="3.45" rx="0.5"/><rect x="49.22" y="12.99" width="3.45" height="3.45" rx="0.5"/><rect x="56.46" y="12.99" width="3.45" height="3.45" rx="0.5"/><rect x="41.98" y="16.55" width="3.45" height="3.45" rx="0.5"/><rect x="45.60" y="16.55" width="3.45" height="3.45" rx="0.5"/><rect x="56.46" y="16.55" width="3.45" height="3.45" rx="0.5"/><rect x="41.98" y="20.12" width="3.45" height="3.45" rx="0.5"/><rect x="56.46" y="20.12" width="3.45" height="3.45" rx="0.5"/><rect x="45.60" y="23.69" width="3.45" height="3.45" rx="0.5"/><rect x="49.22" y="23.69" width="3.45" height="3.45" rx="0.5"/><rect x="52.84" y="23.69" width="3.45" height="3.45" rx="0.5"/></svg>
<div class="t" style="left:188.64px;top:619.45px;font-size:17px;color:#f2f2f2;font-weight:700;font-family:'Liberation Sans';transform:scaleX(0.9584);">DELAY</div>
<div class="t" style="left:412.00px;top:619.45px;font-size:17px;color:#f2f2f2;font-weight:700;font-family:'Liberation Sans';">TEMPO</div>
<div class="t" style="left:623.13px;top:619.45px;font-size:17px;color:#f2f2f2;font-weight:700;font-family:'Liberation Sans';transform:scaleX(0.8742);">REGENERATION</div>
<div class="a" style="left:216.5px;top:652px;width:3px;height:21px;background:#f0f0f0"></div>
<div class="a" style="left:678.5px;top:652px;width:3px;height:21px;background:#f0f0f0"></div>
<svg style="left:167.50px;top:668.30px" width="100" height="100"><circle cx="57" cy="58" r="40" fill="url(#shad)" opacity=".85"/><circle cx="50" cy="50" r="36.3" fill="#3c3c3c"/><circle cx="50" cy="50" r="35.8" fill="none" stroke="#303030" stroke-width="1.2"/><path d="M33.10 79.27 A33.8 33.8 0 0 1 16.82 56.45" fill="none" stroke="#2f93e0" stroke-width="3.4"/><line x1="18.59" y1="56.11" x2="15.15" y2="56.77" stroke="#f0f0f0" stroke-width="4.5"/><circle cx="52" cy="53" r="28.5" fill="#151515" opacity=".8"/><circle cx="50" cy="50" r="26.8" fill="url(#bevD)"/><circle cx="50" cy="50" r="24.8" fill="url(#capD)"/><line x1="50.00" y1="50.00" x2="27.42" y2="54.39" stroke="#f4f4f4" stroke-width="3.2"/></svg>
<svg style="left:628.50px;top:668.30px" width="100" height="100"><circle cx="57" cy="58" r="40" fill="url(#shad)" opacity=".85"/><circle cx="50" cy="50" r="36.3" fill="#3c3c3c"/><circle cx="50" cy="50" r="35.8" fill="none" stroke="#303030" stroke-width="1.2"/><path d="M33.10 79.27 A33.8 33.8 0 0 1 21.98 31.10" fill="none" stroke="#2f93e0" stroke-width="3.4"/><line x1="23.47" y1="32.11" x2="20.57" y2="30.15" stroke="#f0f0f0" stroke-width="4.5"/><circle cx="52" cy="53" r="28.5" fill="#151515" opacity=".8"/><circle cx="50" cy="50" r="26.8" fill="url(#bevD)"/><circle cx="50" cy="50" r="24.8" fill="url(#capD)"/><line x1="50.00" y1="50.00" x2="30.93" y2="37.14" stroke="#f4f4f4" stroke-width="3.2"/></svg>
<div class="a" style="left:838px;top:221px;width:76px;height:33px;background:linear-gradient(#ececec,#d6d6d6 40%,#c4c4c4 75%,#b2b2b2);border:1.3px solid #333;border-radius:5px;box-shadow:0 1px 2px rgba(0,0,0,.35), inset 0 1px 0 rgba(255,255,255,.6)"></div>
<div class="t" style="left:862.73px;top:230.68px;font-size:14.5px;color:#333;font-weight:400;font-family:'Liberation Sans';">Cue</div>
<div class="t" style="left:830.72px;top:263.35px;font-size:19px;color:#222;font-weight:400;font-family:'Liberation Sans';transform:scaleX(0.7778);">1</div>
<div class="t" style="left:829.12px;top:284.95px;font-size:13px;color:#222;font-weight:400;font-family:'Liberation Sans';transform:scaleX(0.8782);">FX</div>
<div class="a" style="left:866.5px;top:286px;width:46.5px;height:561px;background:#c0c0c0;box-shadow:inset 1px 0 0 #cfcfcf"></div>
<div class="a" style="left:889px;top:312.5px;width:3.2px;height:507px;background:#0d0d0d"></div>
<div class="t" style="left:870.50px;top:350.12px;font-size:9.5px;color:#8a8a8a;font-weight:400;font-family:'Liberation Sans';">10</div>
<div class="t" style="left:870.50px;top:397.43px;font-size:9.5px;color:#8a8a8a;font-weight:400;font-family:'Liberation Sans';">5</div>
<div class="t" style="left:870.50px;top:490.43px;font-size:9.5px;color:#8a8a8a;font-weight:400;font-family:'Liberation Sans';">5</div>
<div class="t" style="left:870.50px;top:533.22px;font-size:9.5px;color:#8a8a8a;font-weight:400;font-family:'Liberation Sans';">10</div>
<div class="t" style="left:870.50px;top:613.22px;font-size:9.5px;color:#8a8a8a;font-weight:400;font-family:'Liberation Sans';">20</div>
<div class="t" style="left:870.50px;top:742.12px;font-size:9.5px;color:#8a8a8a;font-weight:400;font-family:'Liberation Sans';">40</div>
<div class="t" style="left:869.50px;top:806.25px;font-size:15px;color:#8a8a8a;font-weight:400;font-family:'Liberation Sans';">&#8734;</div>
<div class="a" style="left:828.5px;top:510.5px;width:23px;height:254px;background:#070707"></div>
<div class="a" style="left:830.0px;top:512.0px;width:9.0px;height:77.0px;background:#2a2808"></div>
<div class="a" style="left:830.0px;top:590px;width:9.0px;height:173.0px;background:#032a05"></div>
<div class="a" style="left:841.0px;top:512.0px;width:9.0px;height:77.0px;background:#2a2808"></div>
<div class="a" style="left:841.0px;top:590px;width:9.0px;height:173.0px;background:#032a05"></div>
<div class="a" style="left:824px;top:588px;width:28px;height:2px;background:#f2f2f2"></div>
<div class="t" style="left:855.50px;top:583.73px;font-size:11.5px;color:#3a3a3a;font-weight:400;font-family:'Liberation Sans';">0</div>
<div class="a" style="left:853.5px;top:441px;width:59.5px;height:16px;background:rgba(0,0,0,.17);border-radius:1px"></div>
<div class="t" style="left:857.00px;top:444.15px;font-size:11px;color:#d4d4d4;font-weight:700;font-family:'Liberation Sans';">U</div>
<div class="a" style="left:868.0px;top:448px;width:9px;height:2px;background:#e8e8e8"></div>
<svg style="left:871px;top:443.5px" width="41" height="85" viewBox="0 0 41 85"><defs><linearGradient id="fg871" x1="0" y1="0" x2="0" y2="1"><stop offset="0" stop-color="#f6f6f6"/><stop offset=".12" stop-color="#e6e6e6"/><stop offset=".135" stop-color="#5f6266"/><stop offset=".22" stop-color="#6c6e72"/><stop offset=".40" stop-color="#858585"/><stop offset=".49" stop-color="#9a9a9a"/><stop offset=".5" stop-color="#3a3a3a"/><stop offset=".52" stop-color="#cfcfcf"/><stop offset=".62" stop-color="#c4c4c4"/><stop offset=".78" stop-color="#e8e8e8"/><stop offset=".86" stop-color="#c0c0c0"/><stop offset=".88" stop-color="#9c9c9c"/><stop offset=".97" stop-color="#b8b8b8"/><stop offset="1" stop-color="#777"/></linearGradient></defs><path d="M2.5 1 L36.5 1 Q38 1 38 2.5 L38 80.5 Q38 82 36.5 82 L2.5 82 Q1 82 1 80.5 L1 66.4 Q7 51.5 5 41.5 Q7 31.5 1 13.3 L1 2.5 Q1 1 2.5 1 Z" fill="url(#fg871)" stroke="#151515" stroke-width="1.6"/><path d="M6 23.2 Q19.5 24.4 37 23.2" stroke="rgba(255,255,255,.22)" stroke-width="1" fill="none"/><path d="M6 29.9 Q19.5 31.1 37 29.9" stroke="rgba(255,255,255,.22)" stroke-width="1" fill="none"/><path d="M6 36.5 Q19.5 37.7 37 36.5" stroke="rgba(255,255,255,.22)" stroke-width="1" fill="none"/><path d="M6 49.8 Q19.5 51.0 37 49.8" stroke="rgba(255,255,255,.22)" stroke-width="1" fill="none"/><path d="M6 56.4 Q19.5 57.6 37 56.4" stroke="rgba(255,255,255,.22)" stroke-width="1" fill="none"/><path d="M6 63.1 Q19.5 64.3 37 63.1" stroke="rgba(255,255,255,.22)" stroke-width="1" fill="none"/></svg>
<div class="a" style="left:838px;top:858px;width:76px;height:33px;background:linear-gradient(#ececec,#d6d6d6 40%,#c4c4c4 75%,#b2b2b2);border:1.3px solid #333;border-radius:5px;box-shadow:0 1px 2px rgba(0,0,0,.35), inset 0 1px 0 rgba(255,255,255,.6)"></div>
<div class="t" style="left:858.91px;top:867.67px;font-size:14.5px;color:#3a3a3a;font-weight:400;font-family:'Liberation Sans';">Mute</div>
<div class="a" style="left:946px;top:222px;width:74px;height:31.5px;background:linear-gradient(#35d035,#14b014 50%,#0a9a0a);border:1px solid #1d3a1d;border-radius:5px;box-shadow:0 1px 2px rgba(0,0,0,.4)"></div>
<div class="t" style="left:969.73px;top:230.68px;font-size:14.5px;color:#f4f4f4;font-weight:400;font-family:'Liberation Sans';">Cue</div>
<div class="t" style="left:936.51px;top:264.55px;font-size:17px;color:#e8e8e8;font-weight:700;font-family:'Liberation Sans';transform:scaleX(0.8886);">L/R</div>
<div class="a" style="left:974px;top:287px;width:47.5px;height:560px;background:#555760;box-shadow:inset 1px 0 0 #5d5f68"></div>
<div class="a" style="left:996.5px;top:313px;width:3.2px;height:506px;background:#0d0d0d"></div>
<div class="t" style="left:978.00px;top:350.12px;font-size:9.5px;color:#9a9ca4;font-weight:400;font-family:'Liberation Sans';">10</div>
<div class="t" style="left:978.00px;top:397.43px;font-size:9.5px;color:#9a9ca4;font-weight:400;font-family:'Liberation Sans';">5</div>
<div class="t" style="left:978.00px;top:490.43px;font-size:9.5px;color:#9a9ca4;font-weight:400;font-family:'Liberation Sans';">5</div>
<div class="t" style="left:978.00px;top:533.22px;font-size:9.5px;color:#9a9ca4;font-weight:400;font-family:'Liberation Sans';">10</div>
<div class="t" style="left:978.00px;top:613.22px;font-size:9.5px;color:#9a9ca4;font-weight:400;font-family:'Liberation Sans';">20</div>
<div class="t" style="left:978.00px;top:742.12px;font-size:9.5px;color:#9a9ca4;font-weight:400;font-family:'Liberation Sans';">40</div>
<div class="t" style="left:977.00px;top:806.25px;font-size:15px;color:#9a9ca4;font-weight:400;font-family:'Liberation Sans';">&#8734;</div>
<div class="a" style="left:938.5px;top:370px;width:19.5px;height:18px;background:#3a3a3e;border:1px solid #26272a;border-radius:2px;box-shadow:0 1px 0 rgba(255,255,255,.1)"></div>
<div class="t" style="left:944.70px;top:373.80px;font-size:12px;color:#30e030;font-weight:700;font-family:'Liberation Sans';">F</div>
<div class="a" style="left:935.5px;top:510.5px;width:24px;height:254px;background:#070707"></div>
<div class="a" style="left:937.0px;top:512.0px;width:9.5px;height:77.0px;background:#2a2808"></div>
<div class="a" style="left:937.0px;top:590px;width:9.5px;height:173.0px;background:#032a05"></div>
<div class="a" style="left:948.5px;top:512.0px;width:9.5px;height:77.0px;background:#2a2808"></div>
<div class="a" style="left:948.5px;top:590px;width:9.5px;height:173.0px;background:#032a05"></div>
<div class="a" style="left:933px;top:588px;width:28px;height:2px;background:#f2f2f2"></div>
<div class="t" style="left:962.00px;top:583.73px;font-size:11.5px;color:#e0e0e0;font-weight:400;font-family:'Liberation Sans';">0</div>
<div class="a" style="left:960.5px;top:440.5px;width:60.5px;height:16px;background:rgba(0,0,0,.17);border-radius:1px"></div>
<div class="t" style="left:964.00px;top:443.65px;font-size:11px;color:#9a9a9a;font-weight:700;font-family:'Liberation Sans';">U</div>
<div class="a" style="left:975.0px;top:447.5px;width:9px;height:2px;background:#e8e8e8"></div>
<svg style="left:978.5px;top:407.5px" width="40.5" height="84" viewBox="0 0 40.5 84"><defs><linearGradient id="fg978" x1="0" y1="0" x2="0" y2="1"><stop offset="0" stop-color="#f6f6f6"/><stop offset=".12" stop-color="#e6e6e6"/><stop offset=".135" stop-color="#5f6266"/><stop offset=".22" stop-color="#6c6e72"/><stop offset=".40" stop-color="#858585"/><stop offset=".49" stop-color="#9a9a9a"/><stop offset=".5" stop-color="#3a3a3a"/><stop offset=".52" stop-color="#cfcfcf"/><stop offset=".62" stop-color="#c4c4c4"/><stop offset=".78" stop-color="#e8e8e8"/><stop offset=".86" stop-color="#c0c0c0"/><stop offset=".88" stop-color="#9c9c9c"/><stop offset=".97" stop-color="#b8b8b8"/><stop offset="1" stop-color="#777"/></linearGradient></defs><path d="M2.5 1 L36.0 1 Q37.5 1 37.5 2.5 L37.5 79.5 Q37.5 81 36.0 81 L2.5 81 Q1 81 1 79.5 L1 65.6 Q7 50.8 5 41.0 Q7 31.2 1 13.1 L1 2.5 Q1 1 2.5 1 Z" fill="url(#fg978)" stroke="#151515" stroke-width="1.6"/><path d="M6 23.0 Q19.25 24.2 36.5 23.0" stroke="rgba(255,255,255,.22)" stroke-width="1" fill="none"/><path d="M6 29.5 Q19.25 30.7 36.5 29.5" stroke="rgba(255,255,255,.22)" stroke-width="1" fill="none"/><path d="M6 36.1 Q19.25 37.3 36.5 36.1" stroke="rgba(255,255,255,.22)" stroke-width="1" fill="none"/><path d="M6 49.2 Q19.25 50.4 36.5 49.2" stroke="rgba(255,255,255,.22)" stroke-width="1" fill="none"/><path d="M6 55.8 Q19.25 57.0 36.5 55.8" stroke="rgba(255,255,255,.22)" stroke-width="1" fill="none"/><path d="M6 62.3 Q19.25 63.5 36.5 62.3" stroke="rgba(255,255,255,.22)" stroke-width="1" fill="none"/></svg>
<div class="a" style="left:946px;top:858px;width:74px;height:33px;background:linear-gradient(#ececec,#d6d6d6 40%,#c4c4c4 75%,#b2b2b2);border:1.3px solid #333;border-radius:5px;box-shadow:0 1px 2px rgba(0,0,0,.35), inset 0 1px 0 rgba(255,255,255,.6)"></div>
<div class="t" style="left:966.41px;top:867.67px;font-size:14.5px;color:#3a3a3a;font-weight:400;font-family:'Liberation Sans';">Mute</div>
<div class="a" style="left:1039px;top:28px;width:329px;height:29px;background:#d9d9d9"></div>
<div class="a" style="left:1039px;top:57px;width:329px;height:1px;background:#444"></div>
<svg style="left:1046px;top:35px" width="70" height="17" viewBox="0 0 70 17"><path d="M5 2 H19 Q22 2 22 5 V10 Q22 13 19 13 H5 Q2 13 2 10 V5 Q2 2 5 2 Z M5 4.6 V10.4 H19 V4.6 Z" fill="#151515" fill-rule="evenodd"/><path d="M13.5 10.5 H18 V14.5 H14.5 Z" fill="#151515"/><path d="M27 2 H43.5 V4.6 H28 V6.3 H40.5 Q43.5 6.3 43.5 9.3 V10 Q43.5 13 40.5 13 H25 V10.4 H40.5 V8.9 H28 Q25 8.9 25 5.9 V5 Q25 2 27 2 Z" fill="#151515"/><path d="M49.5 2 H66 V4.6 H49.5 V10.4 H66 V13 H49.5 Q46.5 13 46.5 10 V5 Q46.5 2 49.5 2 Z" fill="#151515"/></svg>
<div class="t" style="left:1289.50px;top:36.40px;font-size:16px;color:#1a1a1a;font-weight:700;font-family:'Liberation Sans';transform:scaleX(0.9776);">Touch</div>
<div class="t" style="left:1334.95px;top:36.40px;font-size:16px;color:#333;font-weight:400;font-family:'Liberation Sans';transform:scaleX(1.0468);">Mix</div>
<div class="a" style="left:1039px;top:58px;width:53px;height:29px;background:linear-gradient(#7a7a7a,#6c6c6c)"></div>
<div class="a" style="left:1092px;top:58px;width:276px;height:29px;background:linear-gradient(#9b9b9b,#8e8e8e)"></div>
<div class="a" style="left:1091px;top:58px;width:2px;height:29px;background:#5a5a5a"></div>
<div class="t" style="left:1050.97px;top:66.03px;font-size:13.5px;color:#f0f0f0;font-weight:400;font-family:'Liberation Sans';transform:scaleX(1.0274);">Link:</div>
<div class="t" style="left:1104.00px;top:66.03px;font-size:13.5px;color:#eaeaea;font-weight:400;font-family:'Liberation Sans';transform:scaleX(1.0118);">YourMixer</div>
<svg style="left:1343px;top:62px" width="20" height="20" viewBox="0 0 20 20"><circle cx="10" cy="10" r="8.8" fill="#19e619"/><path d="M5.5 10.5 L8 15.5 L11 5.5 L14.5 5.5" fill="none" stroke="#f4fff4" stroke-width="1.8"/></svg>
<div class="a" style="left:1039px;top:86px;width:329px;height:1px;background:#2a2a2a"></div>
<div class="a" style="left:1039px;top:87px;width:53px;height:29px;background:#3e3e3e"></div>
<div class="a" style="left:1092px;top:87px;width:276px;height:29px;background:#4b4b4b"></div>
<div class="a" style="left:1091px;top:87px;width:2px;height:29px;background:#2a2a2a"></div>
<div class="t" style="left:1046.00px;top:94.53px;font-size:13.5px;color:#f4f4f4;font-weight:400;font-family:'Liberation Sans';transform:scaleX(0.9448);text-shadow:0.35px 0 0 #f4f4f4">Scene:</div>
<div class="t" style="left:1104.00px;top:94.53px;font-size:13.5px;color:#0aaaf2;font-weight:400;font-family:'Liberation Sans';transform:scaleX(0.9532);text-shadow:0.35px 0 0 #0aaaf2">TM 16 Rock Band</div>
<div class="a" style="left:1039px;top:116px;width:329px;height:1px;background:#222"></div>
<div class="a" style="left:1168px;top:133px;width:73px;height:57px;border:4px solid #3c3c3c;border-radius:6px;background:linear-gradient(rgba(255,255,255,.9),rgba(200,200,200,.6) 8%,rgba(255,255,255,0) 16%,rgba(255,255,255,0) 88%,rgba(255,255,255,.4)),radial-gradient(ellipse 70% 80% at 50% 55%,#f6f6f6 0%,#ececec 40%,#c8c8c8 80%,#a0a0a0 100%);box-shadow:1px 2px 2px rgba(0,0,0,.25)"></div>
<div class="t" style="left:1185.67px;top:155.40px;font-size:14px;color:#222;font-weight:400;font-family:'Liberation Sans';transform:scaleX(1.0312);">Home</div>
<div class="a" style="left:1168px;top:205px;width:73px;height:42px;border:4px solid #3c3c3c;border-radius:6px;background:linear-gradient(rgba(255,255,255,.9),rgba(200,200,200,.6) 8%,rgba(255,255,255,0) 16%,rgba(255,255,255,0) 88%,rgba(255,255,255,.4)),radial-gradient(ellipse 70% 80% at 50% 55%,#f6f6f6 0%,#ececec 40%,#c8c8c8 80%,#a0a0a0 100%);box-shadow:1px 2px 2px rgba(0,0,0,.25)"></div>
<div class="t" style="left:1187.38px;top:220.10px;font-size:14px;color:#222;font-weight:400;font-family:'Liberation Sans';">Menu</div>
<div class="a" style="left:1168px;top:262px;width:73px;height:42px;border:4px solid #3c3c3c;border-radius:6px;background:linear-gradient(rgba(255,255,255,.9),rgba(200,200,200,.6) 8%,rgba(255,255,255,0) 16%,rgba(255,255,255,0) 88%,rgba(255,255,255,.4)),radial-gradient(ellipse 70% 80% at 50% 55%,#f6f6f6 0%,#ececec 40%,#c8c8c8 80%,#a0a0a0 100%);box-shadow:1px 2px 2px rgba(0,0,0,.25)"></div>
<div class="t" style="left:1180.43px;top:269.10px;font-size:14px;color:#333;font-weight:400;font-family:'Liberation Sans';">Record/</div>
<div class="t" style="left:1190.88px;top:283.60px;font-size:14px;color:#333;font-weight:400;font-family:'Liberation Sans';">Play</div>
<svg style="left:1099px;top:333px" width="210" height="100" viewBox="0 0 210 100"><path d="M33 1 H171 Q177 1 177 7 V46 Q177 51 182 51 H203 Q209 51 209 57 V93 Q209 99 203 99 H7 Q1 99 1 93 V57 Q1 51 7 51 H22 Q27 51 27 46 V7 Q27 1 33 1 Z" fill="#232323"/></svg>
<div class="a" style="left:1132px;top:342px;width:61px;height:32px;border-radius:4px;background:linear-gradient(#ffffff,rgba(255,255,255,0) 12%,rgba(255,255,255,0) 85%,rgba(255,255,255,.5)),linear-gradient(90deg,#9c9c9c,#d0d0d0 14%,#e0e0e0 45%,#f2f2f2 72%,#c4c4c4 92%,#8e8e8e)"></div>
<div class="t" style="left:1143.03px;top:350.88px;font-size:12.5px;color:#333;font-weight:400;font-family:'Liberation Sans';">Wizard</div>
<div class="a" style="left:1209px;top:342px;width:61px;height:32px;border-radius:4px;background:linear-gradient(#ffffff,rgba(255,255,255,0) 12%,rgba(255,255,255,0) 85%,rgba(255,255,255,.5)),linear-gradient(90deg,#9c9c9c,#d0d0d0 14%,#e0e0e0 45%,#f2f2f2 72%,#c4c4c4 92%,#8e8e8e)"></div>
<div class="t" style="left:1228.55px;top:350.88px;font-size:12.5px;color:#333;font-weight:400;font-family:'Liberation Sans';">Info</div>
<div class="a" style="left:1106px;top:392px;width:62px;height:32px;border-radius:4px;background:linear-gradient(#ffffff,rgba(255,255,255,0) 12%,rgba(255,255,255,0) 85%,rgba(255,255,255,.5)),linear-gradient(90deg,#9c9c9c,#d0d0d0 14%,#e0e0e0 45%,#f2f2f2 72%,#c4c4c4 92%,#8e8e8e)"></div>
<div class="t" style="left:1125.86px;top:401.38px;font-size:12.5px;color:#333;font-weight:400;font-family:'Liberation Sans';">Aux</div>
<div class="a" style="left:1173px;top:392px;width:60px;height:32px;border-radius:3px;background:#232323;border:2px solid #e6e6e6;box-shadow:0 0 0 1px #1a1a1a, 1px 2px 2px rgba(0,0,0,.35)"></div>
<div class="t" style="left:1194.68px;top:394.88px;font-size:12.5px;color:#d0d0d0;font-weight:400;font-family:'Liberation Sans';">FX</div>
<div class="t" style="left:1189.08px;top:407.38px;font-size:12.5px;color:#d0d0d0;font-weight:400;font-family:'Liberation Sans';">Mute</div>
<div class="a" style="left:1240px;top:392px;width:62px;height:32px;border-radius:4px;background:linear-gradient(#ffffff,rgba(255,255,255,0) 12%,rgba(255,255,255,0) 85%,rgba(255,255,255,.5)),linear-gradient(90deg,#9c9c9c,#d0d0d0 14%,#e0e0e0 45%,#f2f2f2 72%,#c4c4c4 92%,#8e8e8e)"></div>
<div class="t" style="left:1256.58px;top:396.38px;font-size:12.5px;color:#333;font-weight:400;font-family:'Liberation Sans';">Mute</div>
<div class="t" style="left:1250.63px;top:407.88px;font-size:12.5px;color:#333;font-weight:400;font-family:'Liberation Sans';">Groups</div>
<div class="a" style="left:1168px;top:459px;width:69px;height:61px;background:#232323;border-radius:5px"></div>
<div class="t" style="left:1182.20px;top:467.57px;font-size:10.5px;color:#d6d6d6;font-weight:400;font-family:'Liberation Sans';">Talkback</div>
<div class="a" style="left:1101px;top:484px;width:62px;height:32px;border-radius:3px;background:#232323;border:2px solid #e6e6e6;box-shadow:0 0 0 1px #1a1a1a, 1px 2px 2px rgba(0,0,0,.35)"></div>
<div class="t" style="left:1109.20px;top:493.45px;font-size:13px;color:#d6d6d6;font-weight:400;font-family:'Liberation Sans';">Phones</div>
<div class="a" style="left:1172px;top:484px;width:62px;height:32px;border-radius:3px;background:#232323;border:2px solid #e6e6e6;box-shadow:0 0 0 1px #1a1a1a, 1px 2px 2px rgba(0,0,0,.35)"></div>
<div class="t" style="left:1191.69px;top:493.45px;font-size:13px;color:#d6d6d6;font-weight:400;font-family:'Liberation Sans';">Talk</div>
<div class="a" style="left:1243px;top:484px;width:62px;height:32px;border-radius:3px;background:#232323;border:2px solid #e6e6e6;box-shadow:0 0 0 1px #1a1a1a, 1px 2px 2px rgba(0,0,0,.35)"></div>
<div class="t" style="left:1251.99px;top:493.45px;font-size:13px;color:#d6d6d6;font-weight:400;font-family:'Liberation Sans';">Monitor</div>
<svg style="left:1170px;top:535px" width="66" height="120" viewBox="0 0 66 120"><defs><radialGradient id="tri" cx="50%" cy="55%" r="60%"><stop offset="0" stop-color="#fbfbfb"/><stop offset=".5" stop-color="#ececec"/><stop offset="1" stop-color="#a8a8a8"/></radialGradient></defs><path d="M29.5 6 Q32.5 2 35.5 6 L59.5 37.5 Q62 42.5 56.5 42.5 L9.5 42.5 Q4 42.5 6.5 37.5 Z" fill="url(#tri)" stroke="#2e2e2e" stroke-width="2.2"/><path d="M9.5 76.5 L56.5 76.5 Q62 76.5 59.5 81.5 L35.5 112.5 Q32.5 116.5 29.5 112.5 L6.5 81.5 Q4 76.5 9.5 76.5 Z" fill="url(#tri)" stroke="#2e2e2e" stroke-width="2.2"/></svg>
<div class="t" style="left:1198.00px;top:556.25px;font-size:15px;color:#333;font-weight:400;font-family:'Liberation Sans';">+</div>
<div class="t" style="left:1199.50px;top:620.25px;font-size:15px;color:#333;font-weight:400;font-family:'Liberation Sans';">-</div>
<div class="t" style="left:1182.21px;top:587.25px;font-size:15px;color:#262626;font-weight:400;font-family:'Liberation Sans';transform:scaleX(0.9893);text-shadow:0.4px 0 0 #262626">Nudge</div>
<div class="a" style="left:1039px;top:595.5px;width:106px;height:2px;background:#fafafa"></div>
<div class="a" style="left:1264px;top:595.5px;width:104px;height:2px;background:#fafafa"></div>
<div class="a" style="left:1110px;top:662px;width:84px;height:29px;background:#c6c6c6"></div>
<div class="t" style="left:1121.16px;top:669.60px;font-size:14px;color:#3a3a3a;font-weight:400;font-family:'Liberation Sans';">Clear Clip</div>
<div class="a" style="left:1212px;top:662px;width:84px;height:29px;background:#c6c6c6"></div>
<div class="t" style="left:1222.38px;top:669.60px;font-size:14px;color:#3a3a3a;font-weight:400;font-family:'Liberation Sans';">Clear Cue</div>
<div class="a" style="left:1099px;top:744px;width:84px;height:28px;background:#c6c6c6"></div>
<div class="t" style="left:1116.71px;top:751.10px;font-size:14px;color:#3a3a3a;font-weight:400;font-family:'Liberation Sans';">Nav left</div>
<div class="a" style="left:1223px;top:744px;width:84px;height:28px;background:#c6c6c6"></div>
<div class="t" style="left:1236.93px;top:751.10px;font-size:14px;color:#3a3a3a;font-weight:400;font-family:'Liberation Sans';">Nav right</div>
<div class="a" style="left:1134px;top:697.5px;width:34px;height:34px;border-radius:50%;border:3.5px solid #2e2e2e;background:radial-gradient(circle at 50% 50%,#fafafa 0%,#ededed 55%,#a8a8a8 100%);box-shadow:1px 2px 2px rgba(0,0,0,.3)"></div>
<div class="t" style="left:1141.44px;top:707.60px;font-size:14px;color:#2e2e2e;font-weight:400;font-family:'Liberation Sans';">U2</div>
<div class="a" style="left:1236px;top:697.5px;width:34px;height:34px;border-radius:50%;border:3.5px solid #2e2e2e;background:radial-gradient(circle at 50% 50%,#fafafa 0%,#ededed 55%,#a8a8a8 100%);box-shadow:1px 2px 2px rgba(0,0,0,.3)"></div>
<div class="t" style="left:1243.44px;top:707.60px;font-size:14px;color:#2e2e2e;font-weight:400;font-family:'Liberation Sans';">U3</div>
<div class="a" style="left:1122px;top:779px;width:34px;height:34px;border-radius:50%;border:3.5px solid #2e2e2e;background:radial-gradient(circle at 50% 50%,#fafafa 0%,#ededed 55%,#a8a8a8 100%);box-shadow:1px 2px 2px rgba(0,0,0,.3)"></div>
<div class="t" style="left:1129.44px;top:789.10px;font-size:14px;color:#2e2e2e;font-weight:400;font-family:'Liberation Sans';">U1</div>
<div class="a" style="left:1247px;top:779px;width:34px;height:34px;border-radius:50%;border:3.5px solid #2e2e2e;background:radial-gradient(circle at 50% 50%,#fafafa 0%,#ededed 55%,#a8a8a8 100%);box-shadow:1px 2px 2px rgba(0,0,0,.3)"></div>
<div class="t" style="left:1254.44px;top:789.10px;font-size:14px;color:#2e2e2e;font-weight:400;font-family:'Liberation Sans';">U4</div>
<div class="a" style="left:1039px;top:823.5px;width:329px;height:2px;background:#3a3a3a"></div>
<div class="a" style="left:1039px;top:825.5px;width:329px;height:1px;background:#f0f0f0"></div>
<div class="t" style="left:1128.50px;top:832.60px;font-size:12px;color:#3a3a3a;font-weight:400;font-family:'Liberation Sans';">Zero</div>
<div class="a" style="left:1121.5px;top:851.0px;width:41.0px;height:41.0px;border-radius:50%;border:3.5px solid #2e2e2e;background:radial-gradient(circle at 50% 50%,#fafafa 0%,#ededed 55%,#a8a8a8 100%);box-shadow:1px 2px 2px rgba(0,0,0,.3)"></div>
<div class="t" style="left:1138.50px;top:865.45px;font-size:13px;color:#2e2e2e;font-weight:400;font-family:'Liberation Sans';">0</div>
<div class="t" style="left:1211.30px;top:833.90px;font-size:14px;color:#333;font-weight:400;font-family:'Liberation Sans';transform:scaleX(1.0662);">Control Mode:</div>
<div class="t" style="left:1182.26px;top:866.32px;font-size:13.5px;color:#3a3a3a;font-weight:400;font-family:'Liberation Sans';transform:scaleX(1.0422);">Normal</div>
<div class="t" style="left:1285.43px;top:866.32px;font-size:13.5px;color:#3a3a3a;font-weight:400;font-family:'Liberation Sans';transform:scaleX(0.9696);">Fine</div>
<div class="a" style="left:1230px;top:861px;width:50px;height:21px;background:#a9a9a9;border-radius:11px;box-shadow:inset 0 1px 2px rgba(0,0,0,.3)"></div>
<div class="a" style="left:1229.5px;top:859.5px;width:25px;height:25px;border-radius:50%;border:1.5px solid #666;background:radial-gradient(circle at 45% 40%,#fafafa,#e0e0e0 50%,#a0a0a0);box-shadow:1px 1px 2px rgba(0,0,0,.3)"></div>
</body></html>
